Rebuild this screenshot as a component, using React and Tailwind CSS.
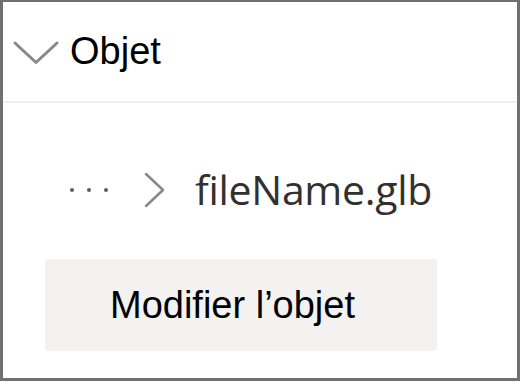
import React from 'react';

const ChevronDown = () => (
    <svg width="46" height="24" viewBox="0 0 46 24" fill="none">
        <path d="M2 2 L23 21.5 L44 2" stroke="#8a8886" strokeWidth="3" strokeLinecap="round" strokeLinejoin="round" />
    </svg>
);

const ChevronRight = () => (
    <svg width="22" height="36" viewBox="0 0 22 36" fill="none">
        <path d="M2 2 L19 18 L2 34" stroke="#8a8886" strokeWidth="2.5" strokeLinecap="round" strokeLinejoin="round" />
    </svg>
);

export default function App() {
    return (
        <div className="w-[520px] h-[381px] bg-white border-[#707070] border-l-[3px] border-t-2 border-r-[3px] border-b-[3px] flex flex-col">
            {/* section header */}
            <div className="h-[101px] flex items-center border-b-2 border-[#efeeed] shrink-0">
                <div className="ml-[10px] mr-[11px] pt-[2px] flex">
                    <ChevronDown />
                </div>
                <span className="text-[38px] text-black leading-none font-['Liberation_Sans',Arial,sans-serif] pb-[2px]">
                    Objet
                </span>
            </div>

            {/* breadcrumb */}
            <div className="flex items-center mt-[66px] ml-[67px]">
                <div className="flex items-center gap-[13px]">
                    <span className="w-[4px] h-[4px] rounded-full bg-[#605e5c]" />
                    <span className="w-[4px] h-[4px] rounded-full bg-[#605e5c]" />
                    <span className="w-[4px] h-[4px] rounded-full bg-[#605e5c]" />
                </div>
                <div className="ml-[36px] flex">
                    <ChevronRight />
                </div>
                <span className="ml-[29px] text-[41px] leading-none font-medium text-[#323130] font-['Open_Sans',sans-serif] tracking-[-0.3px]">
                    fileName.glb
                </span>
            </div>

            {/* action */}
            <div className="mt-[49px] ml-[42px]">
                <button className="w-[392px] h-[92px] bg-[#f3f2f1] rounded-[3px] flex items-center pl-[65px] text-[38px] text-black font-['Liberation_Sans',Arial,sans-serif]">
                    Modifier l’objet
                </button>
            </div>
        </div>
    );
}
